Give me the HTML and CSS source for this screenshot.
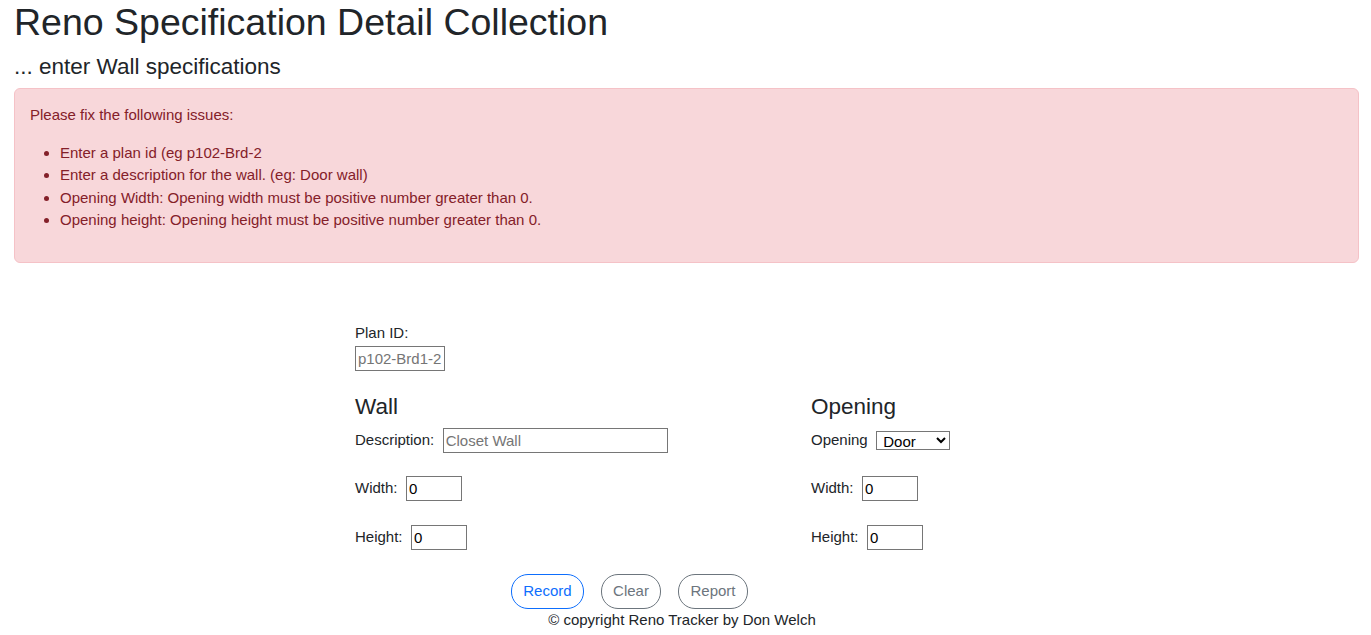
FILE: index.html
```html
<!DOCTYPE html>
<html lang="en">
<head>
<meta charset="utf-8">
<title>Reno Specification Detail Collection</title>
<link rel="stylesheet" href="styles.css">
</head>
<body>
<div class="page">
  <h1 class="title">Reno Specification Detail Collection</h1>
  <h4 class="subtitle">... enter Wall specifications</h4>
  <div class="alert">
    <p class="alert-lead">Please fix the following issues:</p>
    <ul class="alert-list">
      <li>Enter a plan id (eg p102-Brd-2</li>
      <li>Enter a description for the wall. (eg: Door wall)</li>
      <li>Opening Width: Opening width must be positive number greater than 0.</li>
      <li>Opening height: Opening height must be positive number greater than 0.</li>
    </ul>
  </div>

  <form class="spec-form">
    <div class="plan">
      <label class="plan-label" for="plan">Plan ID:</label>
      <input class="field field-plan" id="plan" type="text" placeholder="p102-Brd1-2">
    </div>
    <div class="cols">
      <section class="col">
        <h4 class="col-title">Wall</h4>
        <div class="row">
          <label class="lbl" for="desc">Description:</label>
          <input class="field field-desc" id="desc" type="text" placeholder="Closet Wall">
        </div>
        <div class="row">
          <label class="lbl" for="ww">Width:</label>
          <input class="field field-num" id="ww" type="text" value="0">
        </div>
        <div class="row">
          <label class="lbl" for="wh">Height:</label>
          <input class="field field-num" id="wh" type="text" value="0">
        </div>
      </section>
      <section class="col">
        <h4 class="col-title">Opening</h4>
        <div class="row">
          <label class="lbl" for="otype">Opening</label>
          <select class="select" id="otype">
            <option>Door</option>
            <option>Window</option>
          </select>
        </div>
        <div class="row">
          <label class="lbl" for="ow">Width:</label>
          <input class="field field-num" id="ow" type="text" value="0">
        </div>
        <div class="row">
          <label class="lbl" for="oh">Height:</label>
          <input class="field field-num" id="oh" type="text" value="0">
        </div>
      </section>
    </div>
    <div class="actions">
      <button type="button" class="btn btn-primary">Record</button>
      <button type="button" class="btn btn-secondary">Clear</button>
      <button type="button" class="btn btn-secondary">Report</button>
    </div>
  </form>
  <footer class="footer">© copyright Reno Tracker by Don Welch</footer>
</div>
</body>
</html>
```
FILE: styles.css
```css
html { font-size: 15px; }
body {
  margin: 0;
  font-family: "Liberation Sans", Arial, sans-serif;
  font-size: 15px;
  line-height: 1.5;
  color: #212529;
  background: #fff;
}
.page {
  padding: 0 12px 0 14px;
}
.title {
  margin: 0 0 8px;
  font-size: 37.5px;
  font-weight: 500;
  line-height: 1.2;
}
.subtitle {
  margin: 0 0 8px;
  font-size: 22.5px;
  font-weight: 500;
  line-height: 1.2;
}
.alert {
  padding: 15px;
  margin-bottom: 15px;
  color: #842029;
  background: #f8d7da;
  border: 1px solid #f5c2c7;
  border-radius: 6px;
}
.alert-lead { margin: 0 0 15px; }
.alert-list { margin: 0 0 15px; padding-left: 30px; }

.spec-form {
  margin: 59px 0 0 341px;
}
.plan-label { display: block; }
.field {
  box-sizing: border-box;
  height: 25px;
  margin: 1.5px 0 0;
  padding: 1px 2px;
  border: 1px solid #767676;
  border-radius: 0;
  font-family: inherit;
  font-size: 15px;
  color: #000;
  background: #fff;
}
.field::placeholder { color: #757575; }
.field-plan { width: 90px; margin-bottom: 22.5px; }
.field-desc { width: 225px; margin: 0; }
.field-num { width: 56px; margin: 0; }

.cols {
  display: grid;
  grid-template-columns: 456px auto;
}
.col-title {
  margin: 0 0 7.5px;
  font-size: 22.5px;
  font-weight: 500;
  line-height: 1.2;
}
.row {
  display: flex;
  align-items: center;
  height: 25px;
  margin-bottom: 23.5px;
}
.lbl { margin-right: 8.5px; }
.select {
  box-sizing: border-box;
  width: 74px;
  height: 19px;
  padding: 0 0 0 2px;
  border: 1px solid #767676;
  border-radius: 0;
  font-family: inherit;
  font-size: 15px;
  line-height: 1;
  color: #000;
  background: #fff;
}

.actions {
  display: flex;
  gap: 17px;
  padding-top: 1px;
  padding-left: 156px;
}
.btn {
  box-sizing: border-box;
  padding: 5px 11.25px;
  font-family: inherit;
  font-size: 15px;
  line-height: 22.5px;
  background: transparent;
  border: 1px solid;
  border-radius: 17px;
  cursor: pointer;
}
.btn-primary { color: #0d6efd; border-color: #0d6efd; }
.btn-secondary { color: #6c757d; border-color: #6c757d; }

.footer {
  text-align: center;
  padding-right: 9px;
}
```
